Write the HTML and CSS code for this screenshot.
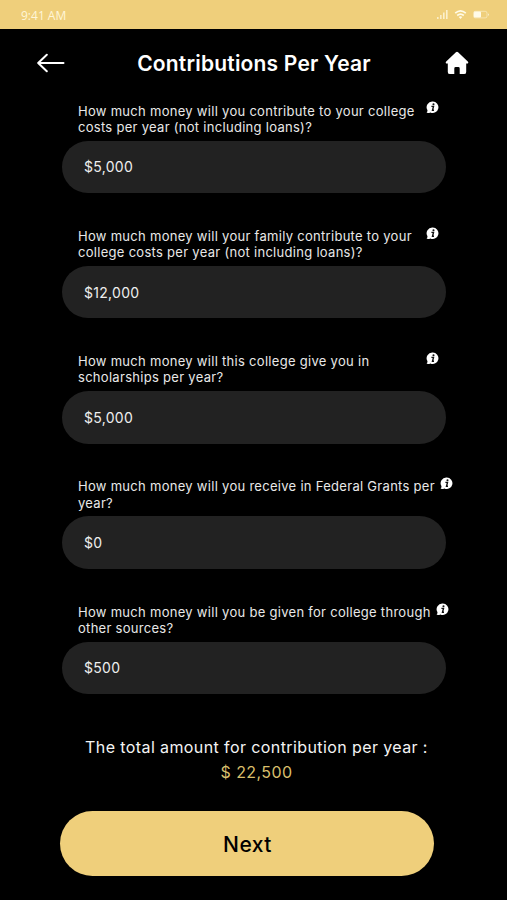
FILE: index.html
```html
<!DOCTYPE html>
<html lang="en">
<head>
    <meta charset="UTF-8">
    <meta name="viewport" content="width=device-width, initial-scale=1.0">
    <title>Contributions Per Year</title>
    <link rel="stylesheet" href="styles.css">
</head>
<body>
    <svg width="0" height="0" class="sprite">
        <symbol id="info" viewBox="0 0 13 13">
            <path d="M6.8 0.5a5.7 5.7 0 1 1-2.4 10.9C3.2 12 1.8 12.1 0.6 11.8c.7-.8.9-1.7.9-2.6A5.7 5.7 0 0 1 6.8 0.5z" fill="#fff"/>
            <circle cx="7.5" cy="3.3" r="1.05" fill="#111"/>
            <path d="M5.4 5.4h2.1L6.5 9.2h1.5" fill="none" stroke="#111" stroke-width="1.4"/>
        </symbol>
    </svg>
    <div class="status-bar">
        <span class="time">9:41 AM</span>
        <svg class="status-icons" width="56" height="12" viewBox="0 0 56 12" fill="#fffbe8">
            <rect x="0" y="8" width="1.6" height="2" opacity=".7"/>
            <rect x="3" y="6" width="1.6" height="4" opacity=".7"/>
            <rect x="6" y="3.5" width="1.6" height="6.5" opacity=".75"/>
            <rect x="9" y="1" width="1.6" height="9" opacity=".75"/>
            <g fill="none" stroke="#fffbe8" stroke-width="1.7">
                <path d="M18.2 4.2Q23.5-.6 28.8 4.2"/>
                <path d="M20.2 6.5Q23.5 3.7 26.8 6.5"/>
            </g>
            <path d="M21.7 8Q23.5 6.7 25.3 8L23.5 10z"/>
            <rect x="36.5" y="2.3" width="13.5" height="6.6" rx="1.8" fill="none" stroke="#fffbe8" stroke-width=".8" opacity=".6"/>
            <rect x="37" y="2.6" width="7" height="6" rx="1"/>
            <path d="M51.2 4.2q1.6 1.4 0 2.8z"/>
        </svg>
    </div>
    <header class="header">
        <svg class="back" width="28" height="20" viewBox="0 0 28 20">
            <path d="M26.5 10H1.5M9.8 1.8L1.2 10l8.6 8.2" fill="none" stroke="#fff" stroke-width="2" stroke-linecap="round" stroke-linejoin="round"/>
        </svg>
        <h1>Contributions Per Year</h1>
        <svg class="home" width="24" height="24" viewBox="0 0 24 24">
            <path d="M10.9 1.2a1.6 1.6 0 0 1 2.2 0l9.7 9.2c1 1 .4 2.2-.8 2.2h-.8v8.3a2.2 2.2 0 0 1-2.2 2.2h-4.3v-5.6a1.4 1.4 0 0 0-1.4-1.4h-2.6a1.4 1.4 0 0 0-1.4 1.4v5.6H5a2.2 2.2 0 0 1-2.2-2.2v-8.3H2c-1.2 0-1.8-1.2-.8-2.2z" fill="#fff"/>
        </svg>
    </header>
    <form class="fields">
        <div class="field">
            <div class="label-row">
                <label for="own">How much money will you contribute to your college<br>costs per year (not including loans)?</label>
                <svg class="info" width="13" height="13"><use href="#info"/></svg>
            </div>
            <input id="own" type="text" value="$5,000">
        </div>
        <div class="field">
            <div class="label-row">
                <label for="family">How much money will your family contribute to your<br>college costs per year (not including loans)?</label>
                <svg class="info" width="13" height="13"><use href="#info"/></svg>
            </div>
            <input id="family" type="text" value="$12,000">
        </div>
        <div class="field">
            <div class="label-row">
                <label for="scholarships">How much money will this college give you in<br>scholarships per year?</label>
                <svg class="info" width="13" height="13"><use href="#info"/></svg>
            </div>
            <input id="scholarships" type="text" value="$5,000">
        </div>
        <div class="field">
            <div class="label-row wide">
                <label for="grants">How much money will you receive in Federal Grants per<br>year?</label>
                <svg class="info" width="13" height="13"><use href="#info"/></svg>
            </div>
            <input id="grants" type="text" value="$0">
        </div>
        <div class="field">
            <div class="label-row medium">
                <label for="other">How much money will you be given for college through<br>other sources?</label>
                <svg class="info" width="13" height="13"><use href="#info"/></svg>
            </div>
            <input id="other" type="text" value="$500">
        </div>
    </form>
    <div class="total">
        <p>The total amount for contribution per year :</p>
        <p class="amount">$ 22,500</p>
    </div>
    <button class="next" type="button">Next</button>
</body>
</html>
```
FILE: styles.css
```css
* {
    box-sizing: border-box;
}
body {
    display: flex;
    flex-direction: column;
    width: 507px;
    height: 900px;
    margin: 0;
    overflow: hidden;
    background: #000;
    color: #fff;
    font-family: Inter, "Liberation Sans", sans-serif;
}
.sprite {
    position: absolute;
}
.status-bar {
    display: flex;
    justify-content: space-between;
    flex: none;
    height: 29px;
    padding: 9px 14px 0 21px;
    background: #efcf7b;
}
.time {
    color: #fff6d8;
    font-family: "Open Sans", sans-serif;
    font-size: 12px;
    line-height: 13px;
}
.header {
    display: flex;
    align-items: center;
    justify-content: space-between;
    flex: none;
    height: 69px;
    padding: 0 38px 0 37px;
}
.back,
.home {
    margin-bottom: 0.5px;
}
h1 {
    margin: 0 2px 0 0;
    font-size: 21px;
    font-weight: 600;
    letter-spacing: 0.2px;
    white-space: nowrap;
}
.fields {
    display: flex;
    flex-direction: column;
    flex: none;
    gap: 34.8px;
    padding: 4.5px 61px 0 62px;
}
.label-row {
    display: flex;
    justify-content: space-between;
    width: 361px;
    height: 38px;
    padding-left: 16px;
}
.label-row.wide {
    width: 375px;
}
.label-row.medium {
    width: 371px;
}
label {
    color: #e8e8e8;
    font-size: 13px;
    line-height: 16.3px;
    letter-spacing: 0.29px;
    white-space: nowrap;
    width: 0;
}
.info {
    flex: none;
    margin: -1.2px -16px 0 auto;
}
input {
    display: block;
    width: 384px;
    height: 52.5px;
    padding: 0 22px;
    border: none;
    border-radius: 27px;
    background: #222;
    color: #eee;
    font-family: inherit;
    font-size: 14px;
    letter-spacing: 0.3px;
}
.total {
    margin-top: 40.8px;
    padding-left: 6px;
    text-align: center;
}
.total p {
    margin: 0;
    color: #f4f4f4;
    font-size: 16px;
    line-height: 25.3px;
    letter-spacing: 0.4px;
}
.total .amount {
    color: #d9bf6c;
}
.next {
    flex: none;
    width: 374px;
    height: 65.5px;
    margin: 25.4px 0 0 60px;
    padding: 1px 0 0 1px;
    border: none;
    border-radius: 33px;
    background: #efcf7b;
    color: #000;
    font-family: inherit;
    font-size: 21px;
    font-weight: 550;
    letter-spacing: 0.5px;
}
```
